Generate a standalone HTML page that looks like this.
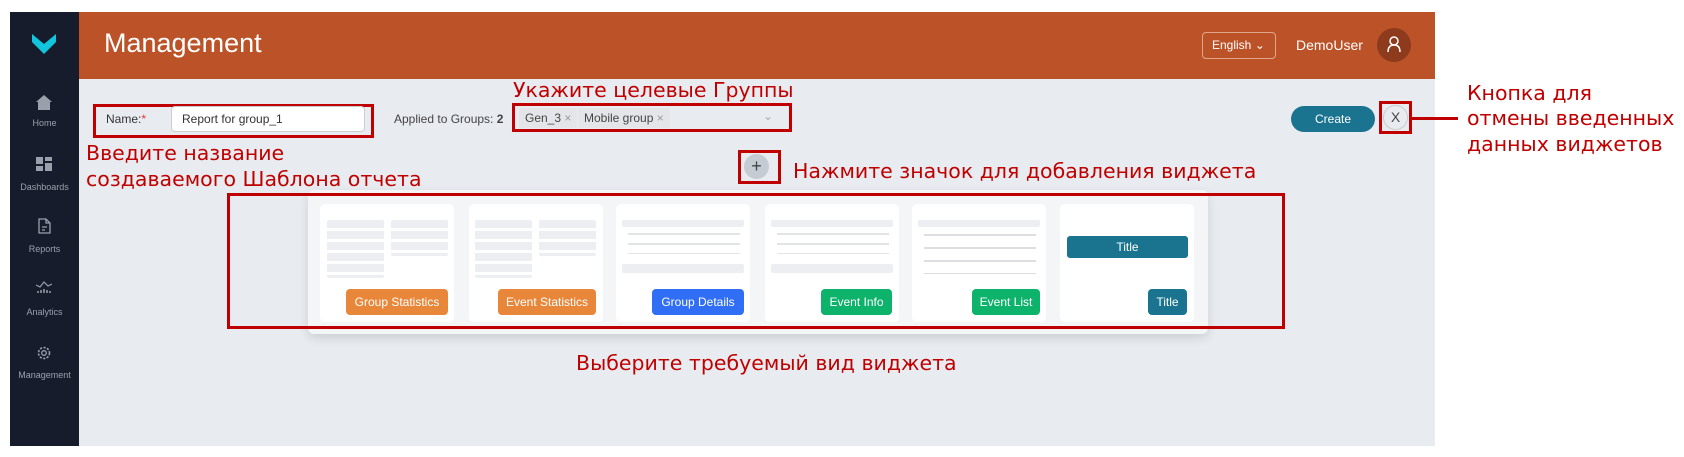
<!DOCTYPE html>
<html><head><meta charset="utf-8"><style>
*{box-sizing:border-box;margin:0;padding:0}
body{width:1684px;height:457px;background:#fff;position:relative;overflow:hidden;font-family:"Liberation Sans","DejaVu Sans",sans-serif}
.a{position:absolute}
.side{left:10px;top:12px;width:69px;height:434px;background:#161c2b}
.hdr{left:79px;top:12px;width:1356px;height:67px;background:#bc5328}
.main{left:79px;top:79px;width:1356px;height:367px;background:#e8ecf0}
.nav{color:#9aa0ab;font-size:9px;width:69px;text-align:center;left:10px}
.ann{color:#c00000;font-family:"DejaVu Sans",sans-serif;font-size:20.5px;white-space:nowrap;line-height:24px}
.rb{border:3px solid #c00000}
.card{top:204px;width:134px;height:118px;background:#fff;border-radius:5px}
.btn{top:289px;height:26px;border-radius:4px;color:#fff;font-size:12px;text-align:center;line-height:26px}
.sk{background:#eceef1;border-radius:2px}
</style></head><body>
<div class="a side"></div>
<svg class="a" style="left:32px;top:34px" width="24" height="20" viewBox="0 0 24 20"><path d="M0 0 L12 10 L24 0 L24 8 L12 20 L0 8Z" fill="#11c5dc"/></svg>
<svg class="a" style="left:36px;top:95px" width="16" height="15" viewBox="0 0 16 15"><path d="M8 0 L16 7 L14 7 L14 15 L2 15 L2 7 L0 7Z" fill="#9aa0ab"/></svg>
<div class="a nav" style="top:118px">Home</div>
<svg class="a" style="left:36px;top:157px" width="16" height="14"><rect x="0" y="0" width="7" height="7" fill="#9aa0ab"/><rect x="9" y="0" width="7" height="4" fill="#9aa0ab"/><rect x="0" y="9" width="7" height="5" fill="#9aa0ab"/><rect x="9" y="6" width="7" height="8" fill="#9aa0ab"/></svg>
<div class="a nav" style="top:182px">Dashboards</div>
<svg class="a" style="left:38px;top:218px" width="13" height="16"><path d="M1 1 H8 L12 5 V15 H1Z M8 1 V5 H12 M4 9 H9 M4 12 H7" fill="none" stroke="#9aa0ab" stroke-width="1.3"/></svg>
<div class="a nav" style="top:244px">Reports</div>
<svg class="a" style="left:36px;top:281px" width="16" height="12"><path d="M0 4 L4 6 L8 1 L12 5 L16 3" fill="none" stroke="#9aa0ab" stroke-width="1.2"/><path d="M2 12V10 M5 12V9 M8 12V8 M11 12V9 M14 12V10" stroke="#9aa0ab" stroke-width="1.5"/></svg>
<div class="a nav" style="top:307px">Analytics</div>
<svg class="a" style="left:36px;top:345px" width="16" height="16" viewBox="0 0 16 16"><circle cx="8" cy="8" r="5.5" fill="none" stroke="#9aa0ab" stroke-width="1.6" stroke-dasharray="2.2 1.4"/><circle cx="8" cy="8" r="2.3" fill="none" stroke="#9aa0ab" stroke-width="1.3"/></svg>
<div class="a nav" style="top:370px">Management</div>

<div class="a hdr"></div>
<div class="a" style="left:104px;top:28px;color:#fff;font-size:27px">Management</div>
<div class="a" style="left:1202px;top:32px;width:74px;height:27px;border:1px solid #e0a58a;border-radius:4px;color:#fff;font-size:12px;line-height:25px;padding-left:9px">English ⌄</div>
<div class="a" style="left:1296px;top:37px;color:#fff;font-size:14px">DemoUser</div>
<div class="a" style="left:1377px;top:28px;width:34px;height:34px;border-radius:50%;background:#8d3a1d"></div>
<svg class="a" style="left:1387px;top:36px" width="14" height="17"><circle cx="7" cy="5" r="4" fill="none" stroke="#fff" stroke-width="1.5"/><path d="M1 16 Q1 9 7 9 Q13 9 13 16" fill="none" stroke="#fff" stroke-width="1.5"/></svg>

<div class="a main"></div>
<div class="a rb" style="left:93px;top:104px;width:281px;height:34px"></div>
<div class="a" style="left:106px;top:112px;font-size:12px;color:#333">Name:<span style="color:#e33">*</span></div>
<div class="a" style="left:171px;top:106px;width:194px;height:26px;background:#fff;border:1px solid #ccc;border-radius:4px;font-size:12px;color:#333;line-height:24px;padding-left:10px">Report for group_1</div>
<div class="a" style="left:394px;top:112px;font-size:12px;color:#444">Applied to Groups: <b>2</b></div>
<div class="a rb" style="left:512px;top:103px;width:280px;height:29px;background:#e8ecf0"></div>
<div class="a" style="left:519px;top:108px;height:20px;background:#e3e5e8;font-size:12px;color:#444;padding:0 6px;line-height:20px">Gen_3 <span style="color:#999">×</span></div>
<div class="a" style="left:578px;top:108px;height:20px;background:#e3e5e8;font-size:12px;color:#444;padding:0 6px;line-height:20px">Mobile group <span style="color:#999">×</span></div>
<div class="a" style="left:763px;top:109px;color:#aaa;font-size:12px">⌄</div>
<div class="a ann" style="left:513px;top:78px">Укажите целевые Группы</div>
<div class="a ann" style="left:86px;top:141px">Введите название</div>
<div class="a ann" style="left:86px;top:167px">создаваемого Шаблона отчета</div>
<div class="a rb" style="left:738px;top:150px;width:43px;height:34px"></div>
<div class="a" style="left:744px;top:154px;width:25px;height:25px;border-radius:50%;background:#c5cbd2;color:#444;font-size:18px;text-align:center;line-height:24px">+</div>
<div class="a ann" style="left:793px;top:159px">Нажмите значок для добавления виджета</div>
<div class="a" style="left:1291px;top:106px;width:84px;height:26px;border-radius:13px;background:#1a7490;color:#fff;font-size:12px;text-align:center;line-height:26px">Create</div>
<div class="a rb" style="left:1379px;top:101px;width:33px;height:33px"></div>
<div class="a" style="left:1383px;top:105px;width:25px;height:25px;border-radius:50%;border:1px solid #ccc;color:#444;font-size:14px;text-align:center;line-height:23px">X</div>
<div class="a" style="left:1412px;top:117px;width:46px;height:3px;background:#c00000"></div>
<div class="a ann" style="left:1467px;top:81px">Кнопка для</div>
<div class="a ann" style="left:1467px;top:106px">отмены введенных</div>
<div class="a ann" style="left:1467px;top:132px">данных виджетов</div>

<div class="a" style="left:308px;top:190px;width:900px;height:144px;background:#f4f5f6;border-radius:6px;box-shadow:0 4px 10px rgba(0,0,0,.12)"></div>
<div class="a card" style="left:320px"></div>
<div class="a card" style="left:469px"></div>
<div class="a card" style="left:616px"></div>
<div class="a card" style="left:765px"></div>
<div class="a card" style="left:912px"></div>
<div class="a card" style="left:1060px"></div>
<div class="a sk" style="left:327px;top:220px;width:57px;height:58px;background:repeating-linear-gradient(#eceef1 0 8px,transparent 8px 11px)"></div>
<div class="a sk" style="left:391px;top:220px;width:57px;height:36px;background:repeating-linear-gradient(#eceef1 0 8px,transparent 8px 11px)"></div>
<div class="a sk" style="left:475px;top:220px;width:57px;height:58px;background:repeating-linear-gradient(#eceef1 0 8px,transparent 8px 11px)"></div>
<div class="a sk" style="left:539px;top:220px;width:57px;height:36px;background:repeating-linear-gradient(#eceef1 0 8px,transparent 8px 11px)"></div>
<div class="a sk" style="left:622px;top:220px;width:122px;height:7px"></div>
<div class="a" style="left:628px;top:233px;width:112px;height:21px;background:repeating-linear-gradient(#e2e4e7 0 2px,transparent 2px 10px)"></div>
<div class="a sk" style="left:622px;top:264px;width:122px;height:9px"></div>
<div class="a sk" style="left:771px;top:220px;width:122px;height:7px"></div>
<div class="a" style="left:777px;top:233px;width:112px;height:21px;background:repeating-linear-gradient(#e2e4e7 0 2px,transparent 2px 10px)"></div>
<div class="a sk" style="left:771px;top:264px;width:122px;height:9px"></div>
<div class="a sk" style="left:918px;top:220px;width:122px;height:7px"></div>
<div class="a" style="left:924px;top:234px;width:112px;height:40px;background:repeating-linear-gradient(#dcdee1 0 2px,transparent 2px 13px)"></div>
<div class="a" style="left:1067px;top:236px;width:121px;height:22px;background:#1a7490;border-radius:3px;color:#fff;font-size:12px;text-align:center;line-height:22px">Title</div>
<div class="a btn" style="left:346px;width:102px;background:#e8873a">Group Statistics</div>
<div class="a btn" style="left:498px;width:98px;background:#e8873a">Event Statistics</div>
<div class="a btn" style="left:652px;width:92px;background:#2f6ef5">Group Details</div>
<div class="a btn" style="left:821px;width:71px;background:#0db26b">Event Info</div>
<div class="a btn" style="left:972px;width:68px;background:#0db26b">Event List</div>
<div class="a btn" style="left:1148px;width:39px;background:#1a7490">Title</div>
<div class="a rb" style="left:227px;top:193px;width:1058px;height:136px"></div>
<div class="a ann" style="left:576px;top:351px">Выберите требуемый вид виджета</div>
</body></html>
